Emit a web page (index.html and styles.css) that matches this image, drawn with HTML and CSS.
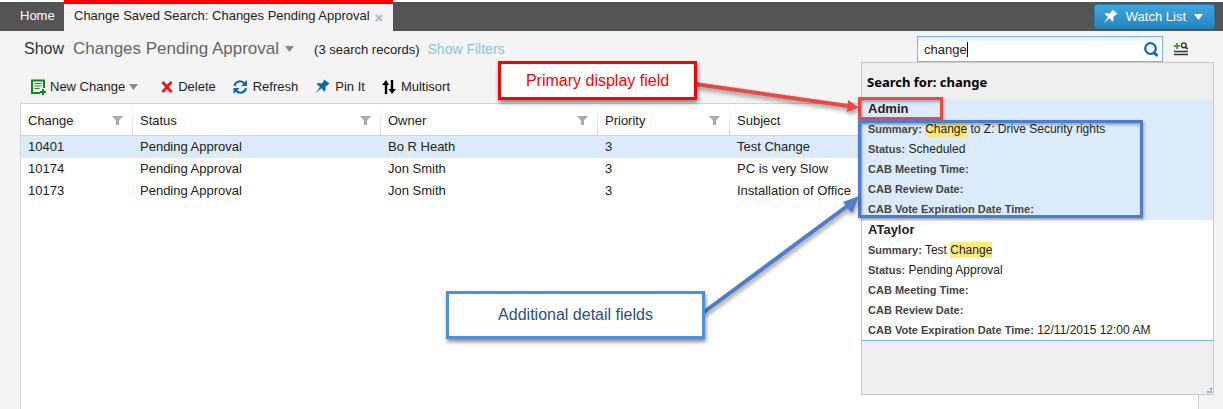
FILE: index.html
```html
<!DOCTYPE html>
<html lang="en">
<head>
  <meta charset="utf-8">
  <title>Changes Pending Approval</title>
  <link rel="stylesheet" href="styles.css">
</head>
<body>
  <nav class="topbar">
    <a class="home" href="#">Home</a>
    <div class="tab">
      <a href="#">Change Saved Search: Changes Pending Approval</a>
      <button class="tab-close" type="button" aria-label="Close tab">
        <svg width="8" height="8" viewBox="0 0 8 8"><path d="M1 1l6 6M7 1l-6 6" stroke="#bdbdbd" stroke-width="2.400"/></svg>
      </button>
    </div>
    <button class="watch-list" type="button">
      <svg width="15" height="15" viewBox="0 0 15 15"><path d="M9 0.500L14.500 4.500L12.500 6.300L10.500 7.500L10.500 11.500L9.300 12.500L6.300 9.300L0.500 14.500L5 8L1.500 5L3 4L6.800 4.500L8.500 2.500Z" fill="#fff"/></svg>
      Watch List
      <svg width="9" height="6" viewBox="0 0 9 6"><path d="M0 0h9L4.500 6z" fill="#fff"/></svg>
    </button>
  </nav>

  <header class="heading">
    <h1>Show</h1>
    <button class="saved-search" type="button">Changes Pending Approval
      <svg width="9" height="6" viewBox="0 0 9 6"><path d="M0 0h9L4.500 6z" fill="#888"/></svg>
    </button>
    <span class="count">(3 search records)</span>
    <a class="filters" href="#">Show Filters</a>

    <div class="search-area">
      <div class="search-box">
        <input type="text" value="change" aria-label="Search">
        <span class="text-cursor"></span>
        <button type="button" aria-label="Search">
          <svg width="15" height="15" viewBox="0 0 15 15"><circle cx="6.500" cy="6.500" r="5.300" fill="none" stroke="#0b68b5" stroke-width="2.200"/><path d="M9.500 10l4 4" stroke="#0b68b5" stroke-width="2.800"/></svg>
        </button>
      </div>
      <button class="search-options" type="button" aria-label="Search options">
        <svg width="15" height="14" viewBox="0 0 15 14"><path d="M0 4h6M3 1v6" stroke="#5aa02c" stroke-width="2"/><circle cx="9.800" cy="3.300" r="2.400" fill="none" stroke="#333" stroke-width="1.400"/><path d="M11.500 5l2.200 2.200" stroke="#333" stroke-width="1.600"/><path d="M0 9.500h14M0 12.500h14" stroke="#333" stroke-width="1.600"/></svg>
      </button>

      <section class="results">
        <h2>Search for: change</h2>
        <div class="result selected">
          <h3>Admin</h3>
          <p><b>Summary:</b> <mark>Change</mark> to Z: Drive Security rights</p>
          <p><b>Status:</b> Scheduled</p>
          <p><b>CAB Meeting Time:</b></p>
          <p><b>CAB Review Date:</b></p>
          <p><b>CAB Vote Expiration Date Time:</b></p>
          <div class="outline-primary"></div>
          <div class="outline-detail"></div>
        </div>
        <div class="result">
          <h3>ATaylor</h3>
          <p><b>Summary:</b> Test <mark>Change</mark></p>
          <p><b>Status:</b> Pending Approval</p>
          <p><b>CAB Meeting Time:</b></p>
          <p><b>CAB Review Date:</b></p>
          <p><b>CAB Vote Expiration Date Time:</b> 12/11/2015 12:00 AM</p>
        </div>
        <div class="results-footer">
          <svg width="6" height="6" viewBox="0 0 6 6"><path d="M3 0h2v2h-2zM0 3h2v2h-2zM3 3h2v2h-2z" fill="#6ba5e7"/></svg>
        </div>
      </section>
    </div>
  </header>

  <div class="toolbar">
    <button class="tool-new" type="button">
      <svg width="15" height="16" viewBox="0 0 15 16"><path d="M13 9V1.500H1V14h8" fill="none" stroke="#0a8a1f" stroke-width="2"/><path d="M3.500 4.500h7M3.500 7h7M3.500 9.500h5" stroke="#0a8a1f" stroke-width="1.200"/><path d="M9 13h6M12 10v6" stroke="#0a8a1f" stroke-width="2"/></svg>
      New Change
      <svg width="9" height="6" viewBox="0 0 9 6"><path d="M0 0h9L4.500 6z" fill="#888"/></svg>
    </button>
    <button class="tool-delete" type="button">
      <svg width="12" height="12" viewBox="0 0 12 12"><path d="M1.500 1l9 10M10.500 1l-9 10" stroke="#e21b1b" stroke-width="2.800"/></svg>
      Delete
    </button>
    <button class="tool-refresh" type="button">
      <svg width="15" height="14" viewBox="0 0 15 14"><path d="M1.500 6C2.500 0.800 8.500 0 11.500 3.500M13 8C12 13.200 6 14 3 10.500" fill="none" stroke="#0b68b5" stroke-width="2"/><path d="M14 0v6H8zM0.500 14V8h6z" fill="#0b68b5"/></svg>
      Refresh
    </button>
    <button class="tool-pin" type="button">
      <svg width="15" height="15" viewBox="0 0 15 15"><path d="M9 0.500L14.500 4.500L12.500 6.300L10.500 7.500L10.500 11.500L9.300 12.500L6.300 9.300L0.500 14.500L5 8L1.500 5L3 4L6.800 4.500L8.500 2.500Z" fill="#0b68b5"/></svg>
      Pin It
    </button>
    <button class="tool-sort" type="button">
      <svg width="14" height="14" viewBox="0 0 14 14"><path d="M4 14V3M10 0v10" stroke="#000" stroke-width="2.400"/><path d="M0 5L4 0l3 5zM6.500 9L10 14l4-5z" fill="#000"/></svg>
      Multisort
    </button>
  </div>

  <main class="grid">
    <table>
      <colgroup>
        <col class="col-change"><col class="col-status"><col class="col-owner"><col class="col-priority"><col>
      </colgroup>
      <thead>
        <tr>
          <th><div>Change <svg width="11" height="9" viewBox="0 0 11 9"><path d="M0 0h11L7 4.500V9H4V4.500z" fill="#aaa"/></svg></div></th>
          <th><div>Status <svg width="11" height="9" viewBox="0 0 11 9"><path d="M0 0h11L7 4.500V9H4V4.500z" fill="#aaa"/></svg></div></th>
          <th><div>Owner <svg width="11" height="9" viewBox="0 0 11 9"><path d="M0 0h11L7 4.500V9H4V4.500z" fill="#aaa"/></svg></div></th>
          <th><div>Priority <svg width="11" height="9" viewBox="0 0 11 9"><path d="M0 0h11L7 4.500V9H4V4.500z" fill="#aaa"/></svg></div></th>
          <th>Subject</th>
        </tr>
      </thead>
      <tbody>
        <tr class="selected"><td>10401</td><td>Pending Approval</td><td>Bo R Heath</td><td>3</td><td>Test Change</td></tr>
        <tr><td>10174</td><td>Pending Approval</td><td>Jon Smith</td><td>3</td><td>PC is very Slow</td></tr>
        <tr><td>10173</td><td>Pending Approval</td><td>Jon Smith</td><td>3</td><td>Installation of Office</td></tr>
      </tbody>
    </table>
  </main>

  <!-- Callouts -->
  <svg class="arrows" width="180" height="260" viewBox="0 0 180 260">
    <g fill="#ea4a44" stroke="#ea4a44"><path d="M5 14L158 36" stroke-width="4"/><path d="M158 30L169 37.500L157 42z" stroke="none"/></g>
    <g fill="#4f7dcd" stroke="#4f7dcd"><path d="M14 242L160 134" stroke-width="4"/><path d="M153 132L169 126L162 143z" stroke="none"/></g>
  </svg>
  <div class="callout callout-primary">Primary display field</div>
  <div class="callout callout-detail">Additional detail fields</div>
</body>
</html>
```

FILE: styles.css
```css
* { box-sizing: border-box; }
body {
  margin: 0;
  min-height: 100vh;
  display: flex;
  flex-direction: column;
  position: relative;
  background-color: #f4f4f4;
  color: #222;
  font-family: "Liberation Sans", Arial, sans-serif;
  font-size: 13px;
}
h1, h2, h3, p { margin: 0; }
a { color: inherit; text-decoration: none; }
svg { flex: none; }
button {
  display: flex;
  align-items: center;
  padding: 0;
  border: none;
  background: none;
  color: inherit;
  font: inherit;
  white-space: nowrap;
}

/* Top bar */
.topbar {
  display: flex;
  height: 31px;
  border-top: 2px solid #fff;
  background-color: #545454;
}
.home {
  width: 64px;
  padding-left: 20px;
  color: #fff;
  line-height: 27px;
}
.tab {
  display: flex;
  align-items: center;
  gap: 5px;
  margin-top: -2px;
  padding: 0 10px;
  border-top: 4px solid #f00;
  background-color: #f4f4f4;
}
.tab a { line-height: 24px; padding-bottom: 3px; }
.watch-list {
  gap: 8px;
  height: 25px;
  margin: 2px 8px 0 auto;
  padding: 0 11px 0 8px;
  border: 1px solid #1f7fb8;
  border-radius: 3px;
  background: linear-gradient(#43a5dc, #2488c4);
  color: #fff;
}

/* Heading row */
.heading {
  display: flex;
  align-items: center;
  height: 36px;
  padding: 0 9px 0 24px;
}
.heading h1 {
  width: 49px;
  font-size: 16px;
  font-weight: normal;
  color: #333;
}
.saved-search {
  gap: 6px;
  margin-right: 20px;
  color: #666;
  font-size: 17px;
}
.count { margin-right: 8px; }
.filters { color: #84c5dd; font-size: 14px; }

/* Search */
.search-area {
  position: relative;
  display: flex;
  align-items: center;
  gap: 11px;
  height: 26px;
  margin-left: auto;
  padding-right: 25px;
}
.search-box {
  display: flex;
  align-items: center;
  width: 246px;
  height: 26px;
  padding-right: 3px;
  border: 1px solid #7eb4ea;
  background: linear-gradient(#dcebfb, #fff 5px);
  position: relative;
}
.search-box input {
  flex: 1;
  min-width: 0;
  padding: 0 0 0 6px;
  border: none;
  outline: none;
  background: none;
  color: #222;
  font: inherit;
}
.text-cursor {
  position: absolute;
  left: 49px;
  top: 5px;
  width: 1px;
  height: 15px;
  background-color: #000;
}
.results {
  position: absolute;
  top: 26px;
  right: 0;
  z-index: 10;
  width: 353px;
  border: 1px solid #c8c8c8;
  background-color: #fff;
}
.results h2 {
  height: 36px;
  padding-left: 5px;
  background-color: #efefef;
  color: #000;
  font-family: "Noto Sans", Tahoma, sans-serif;
  font-size: 13px;
  line-height: 38px;
}
.result {
  position: relative;
  padding-left: 6px;
  border-bottom: 1px solid #7eb4ea;
}
.result.selected {
  background-color: #dcebfb;
  border-color: #dcebfb;
}
.result h3 { font-size: 13px; line-height: 20px; }
.result p { font-size: 12px; line-height: 20px; }
.result b { color: #444; font-size: 11px; }
.result mark { padding: 1px 0; background-color: #ffe97a; color: inherit; }
.results-footer {
  display: flex;
  align-items: flex-end;
  justify-content: flex-end;
  height: 53px;
  background-color: #efefef;
}
.outline-primary, .outline-detail {
  position: absolute;
  left: -4px;
  box-shadow: 1px 2px 3px rgba(0, 0, 0, 0.3), inset 1px 2px 3px rgba(0, 0, 0, 0.3);
}
.outline-primary {
  top: -2px;
  width: 85px;
  height: 23px;
  border: 3px solid #ea4a44;
}
.outline-detail {
  top: 21px;
  width: 285px;
  height: 98px;
  border: 3px solid #4f7dcd;
}

/* Toolbar */
.toolbar {
  display: flex;
  align-items: center;
  gap: 17px;
  height: 36px;
  padding: 3px 0 0 31px;
}
.toolbar button { gap: 5px; }
.toolbar .tool-new { gap: 4px; margin-right: 6px; }

/* Grid */
.grid {
  flex: 1;
  margin: 0 24px 0 20px;
  border: 1px solid #d4d4d4;
  border-bottom: none;
  background-color: #fff;
}
table {
  width: 100%;
  border-collapse: separate;
  border-spacing: 0;
  table-layout: fixed;
}
.col-change { width: 112px; }
.col-status { width: 248px; }
.col-owner { width: 217px; }
.col-priority { width: 132px; }
th, td {
  padding: 0 0 0 7px;
  text-align: left;
  font-weight: normal;
  white-space: nowrap;
}
th {
  height: 32px;
  padding-top: 2px;
  border-bottom: 1px solid #d4d4d4;
  background: linear-gradient(#fff, #d4d4d4) right / 1px 100% no-repeat;
}
th div {
  display: flex;
  align-items: center;
  justify-content: space-between;
  padding-right: 10px;
}
td { height: 22px; padding-bottom: 2px; }
tr.selected { background-color: #dcebfb; }

/* Callouts */
.arrows {
  position: absolute;
  top: 70px;
  left: 690px;
  z-index: 20;
  filter: drop-shadow(1px 3px 2px rgba(0, 0, 0, 0.4));
}
.callout {
  position: absolute;
  z-index: 20;
  background-color: #fff;
  box-shadow: 1px 3px 4px rgba(0, 0, 0, 0.45);
  font-size: 16px;
  text-align: center;
}
.callout-primary {
  top: 61px;
  left: 498px;
  width: 199px;
  border: 3px solid #f00;
  color: #f00;
  line-height: 33px;
}
.callout-detail {
  top: 291px;
  left: 446px;
  width: 259px;
  border: 3px solid #5290d5;
  color: #2a4d86;
  line-height: 42px;
}
```
